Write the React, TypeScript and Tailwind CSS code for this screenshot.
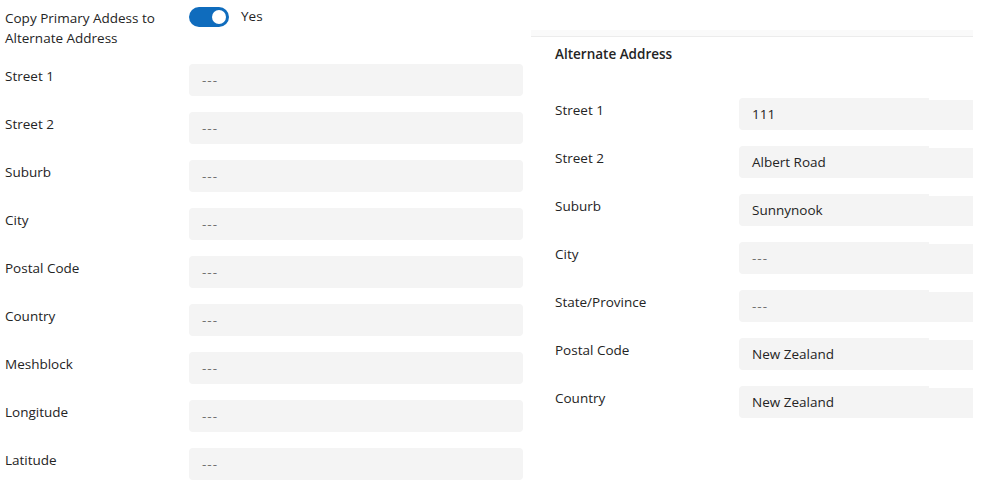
const leftRows = [
  "Street 1",
  "Street 2",
  "Suburb",
  "City",
  "Postal Code",
  "Country",
  "Meshblock",
  "Longitude",
  "Latitude",
]

const rightRows = [
  { label: "Street 1", value: "111" },
  { label: "Street 2", value: "Albert Road" },
  { label: "Suburb", value: "Sunnynook" },
  { label: "City", value: "" },
  { label: "State/Province", value: "" },
  { label: "Postal Code", value: "New Zealand" },
  { label: "Country", value: "New Zealand" },
]

const Field = ({ value }: { value: string }) => (
  <div className="flex w-[234px]">
    <div className="h-8 w-[190px] rounded-l bg-[#f4f4f4] px-[13px] flex items-center">
      {value ? (
        <span className="text-[#242424]">{value}</span>
      ) : (
        <span className="text-[#707070] tracking-[1px]">---</span>
      )}
    </div>
    <div className="h-[30px] mt-[2px] w-[44px] bg-[#f4f4f4]" />
  </div>
)

const App = () => {
  return (
    <div
      className="w-[982px] h-[482px] bg-white flex text-[13.5px] leading-5 text-[#242424] overflow-hidden"
      style={{ fontFamily: '"Segoe UI", "Open Sans", sans-serif' }}
    >
      <section className="w-[531px] shrink-0 pl-[5px] flex flex-col gap-4">
        <div className="flex h-12">
          <div className="w-[184px] pt-2">
            Copy Primary Addess to
            <br />
            Alternate Address
          </div>
          <div className="flex items-start pt-[7px] gap-3">
            <div className="w-10 h-5 rounded-full bg-[#0f6cbd] flex items-center justify-end pr-[3px]">
              <div className="w-[14px] h-[14px] rounded-full bg-white" />
            </div>
            <span className="leading-5 -mt-[1px]">Yes</span>
          </div>
        </div>
        {leftRows.map((label) => (
          <div key={label} className="flex">
            <div className="w-[184px] pt-[2px]">{label}</div>
            <div className="h-8 w-[334px] rounded bg-[#f4f4f4] px-[13px] flex items-center text-[#707070] tracking-[1px]">
              ---
            </div>
          </div>
        ))}
      </section>

      <section className="w-[442px] shrink-0 pt-[30px] flex flex-col">
        <div className="h-[7px] bg-[#fafafa] border-b border-[#ececec]" />
        <h2 className="pl-6 mt-[7px] font-semibold">Alternate Address</h2>
        <div className="mt-[34px] flex flex-col gap-4">
          {rightRows.map((row) => (
            <div key={row.label} className="flex">
              <div className="w-[208px] pl-6 pt-[2px]">{row.label}</div>
              <Field value={row.value} />
            </div>
          ))}
        </div>
      </section>
    </div>
  )
}

export default App
